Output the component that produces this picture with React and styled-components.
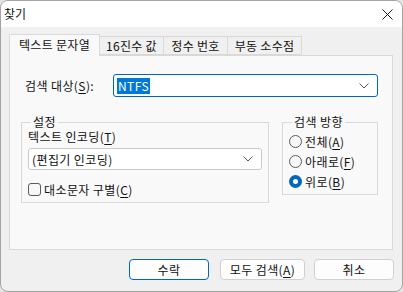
import React from 'react';
import styled, { createGlobalStyle } from 'styled-components';

const GlobalStyle = createGlobalStyle`
  html, body {
    margin: 0;
    padding: 0;
    background: #e4e4e4;
  }
  body {
    font-family: "Noto Sans CJK KR", "Noto Sans", sans-serif;
    font-size: 12px;
    color: #111111;
  }
`;

const Window = styled.div`
  width: 401px;
  height: 290px;
  border: 1px solid #a3a3a3;
  border-radius: 8px;
  background: #f0f0f0;
  overflow: hidden;
  display: flex;
  flex-direction: column;
`;

const TitleBar = styled.div`
  height: 26px;
  background: #ffffff;
  display: flex;
  align-items: center;
  justify-content: space-between;
  padding-left: 3px;
  padding-right: 9px;
  line-height: 1;
`;

const Body = styled.div`
  flex: 1;
  display: flex;
  flex-direction: column;
  padding: 7px 8px 0 8px;
`;

const TabRow = styled.div`
  display: flex;
  align-items: flex-end;
  height: 21px;
  position: relative;
  z-index: 1;
`;

const Tab = styled.div`
  width: ${p => p.$w}px;
  height: ${p => (p.$active ? '22px' : '19px')};
  margin-bottom: ${p => (p.$active ? '-1px' : '0')};
  background: ${p => (p.$active ? '#f9f9f9' : '#f0f0f0')};
  border: 1px solid #d9d9d9;
  border-bottom: ${p => (p.$active ? 'none' : '1px solid #d9d9d9')};
  border-left: ${p => (p.$first ? '1px solid #d9d9d9' : 'none')};
  display: flex;
  align-items: center;
  justify-content: center;
  padding-bottom: ${p => (p.$active ? '2px' : '0')};
  white-space: nowrap;
  box-sizing: border-box;
  letter-spacing: 0.3px;
`;

const Panel = styled.div`
  width: 384px;
  height: 195px;
  border: 1px solid #d9d9d9;
  background: #f9f9f9;
  box-sizing: border-box;
  padding: 18px 14px 0 15px;
  display: flex;
  flex-direction: column;
`;

const TargetRow = styled.div`
  display: flex;
  align-items: center;
`;

const TargetLabel = styled.span`
  width: 88px;
  flex: none;
  letter-spacing: 0.4px;
`;

const Combo = styled.div`
  flex: ${p => (p.$grow ? 1 : 'none')};
  height: ${p => p.$h || 23}px;
  margin-top: ${p => p.$mt || 0}px;
  box-sizing: border-box;
  background: #ffffff;
  border: 1px solid ${p => (p.$focus ? '#0067c0' : '#c9c9c9')};
  border-radius: 3px;
  display: flex;
  align-items: center;
  justify-content: space-between;
  padding: 0 8px 0 3px;
  letter-spacing: 0.4px;
`;

const Selected = styled.span`
  background: #0078d7;
  color: #ffffff;
  padding: 0 1px;
  line-height: 16px;
`;

const GroupRow = styled.div`
  display: flex;
  align-items: flex-start;
  gap: 13px;
  margin-top: 19px;
  margin-left: -4px;
`;

const Group = styled.fieldset`
  margin: 0;
  width: ${p => p.$w}px;
  height: ${p => p.$h}px;
  box-sizing: border-box;
  border: 1px solid #d9d9d9;
  padding: 0 6px;
  display: flex;
  flex-direction: column;
  letter-spacing: 0.4px;
`;

const Legend = styled.legend`
  padding: 0 2px;
  margin-left: 3px;
  line-height: 12px;
`;

const FieldLabel = styled.div`
  margin-top: 1px;
  line-height: 16px;
`;

const CheckRow = styled.label`
  display: flex;
  align-items: center;
  gap: 3px;
  height: 16px;
  margin-top: 11px;
`;

const CheckBox = styled.span`
  width: 13px;
  height: 13px;
  box-sizing: border-box;
  border: 1px solid #5a5a5a;
  border-radius: 3px;
  background: #f7f7f7;
`;

const RadioList = styled.div`
  display: flex;
  flex-direction: column;
  gap: 4px;
  margin-top: 5px;
`;

const RadioRow = styled.label`
  display: flex;
  align-items: center;
  gap: 3px;
  height: 16px;
`;

const Radio = styled.span`
  width: 13px;
  height: 13px;
  box-sizing: border-box;
  border-radius: 50%;
  border: ${p => (p.$on ? '4px solid #0067c0' : '1px solid #5a5a5a')};
  background: ${p => (p.$on ? '#ffffff' : '#f7f7f7')};
`;

const U = styled.span`
  text-decoration: underline;
  text-underline-offset: 2px;
`;

const Footer = styled.div`
  display: flex;
  justify-content: flex-end;
  padding-top: 9px;
`;

const Button = styled.button`
  width: ${p => p.$w || 80}px;
  height: 21px;
  margin-left: ${p => p.$gap || 0}px;
  box-sizing: border-box;
  background: #fdfdfd;
  border: 1px solid ${p => (p.$default ? '#0067c0' : '#d0d0d0')};
  border-radius: 4px;
  font-family: inherit;
  font-size: 12px;
  letter-spacing: 0.4px;
  color: #111111;
  padding: 0;
  line-height: 1;
`;

const Chevron = () => (
  <svg width="10" height="6" viewBox="0 0 10 6">
    <path d="M0.5 0.5 L5 5 L9.5 0.5" fill="none" stroke="#555" strokeWidth="1" />
  </svg>
);

const CloseIcon = () => (
  <svg width="11" height="11" viewBox="0 0 11 11">
    <path d="M0.5 0.5 L10.5 10.5 M10.5 0.5 L0.5 10.5" stroke="#1a1a1a" strokeWidth="1" />
  </svg>
);

export default function App() {
  return (
    <>
      <GlobalStyle />
      <Window>
        <TitleBar>
          <span>찾기</span>
          <CloseIcon />
        </TitleBar>
        <Body>
          <TabRow>
            <Tab $active $first $w={91}>텍스트 문자열</Tab>
            <Tab $w={64}>16진수 값</Tab>
            <Tab $w={64}>정수 번호</Tab>
            <Tab $w={74}>부동 소수점</Tab>
          </TabRow>
          <Panel>
            <TargetRow>
              <TargetLabel>검색 대상(<U>S</U>):</TargetLabel>
              <Combo $grow $focus>
                <Selected>NTFS</Selected>
                <Chevron />
              </Combo>
            </TargetRow>
            <GroupRow>
              <Group $w={248} $h={87}>
                <Legend>설정</Legend>
                <FieldLabel>텍스트 인코딩(<U>T</U>)</FieldLabel>
                <Combo $h={22} $mt={3}>
                  <span>(편집기 인코딩)</span>
                  <Chevron />
                </Combo>
                <CheckRow>
                  <CheckBox />
                  <span>대소문자 구별(<U>C</U>)</span>
                </CheckRow>
              </Group>
              <Group $w={96} $h={79}>
                <Legend>검색 방향</Legend>
                <RadioList>
                  <RadioRow><Radio /><span>전체(<U>A</U>)</span></RadioRow>
                  <RadioRow><Radio /><span>아래로(<U>F</U>)</span></RadioRow>
                  <RadioRow><Radio $on /><span>위로(<U>B</U>)</span></RadioRow>
                </RadioList>
              </Group>
            </GroupRow>
          </Panel>
          <Footer>
            <Button $default>수락</Button>
            <Button $w={85} $gap={11}>모두 검색(<U>A</U>)</Button>
            <Button $gap={9}>취소</Button>
          </Footer>
        </Body>
      </Window>
    </>
  );
}
